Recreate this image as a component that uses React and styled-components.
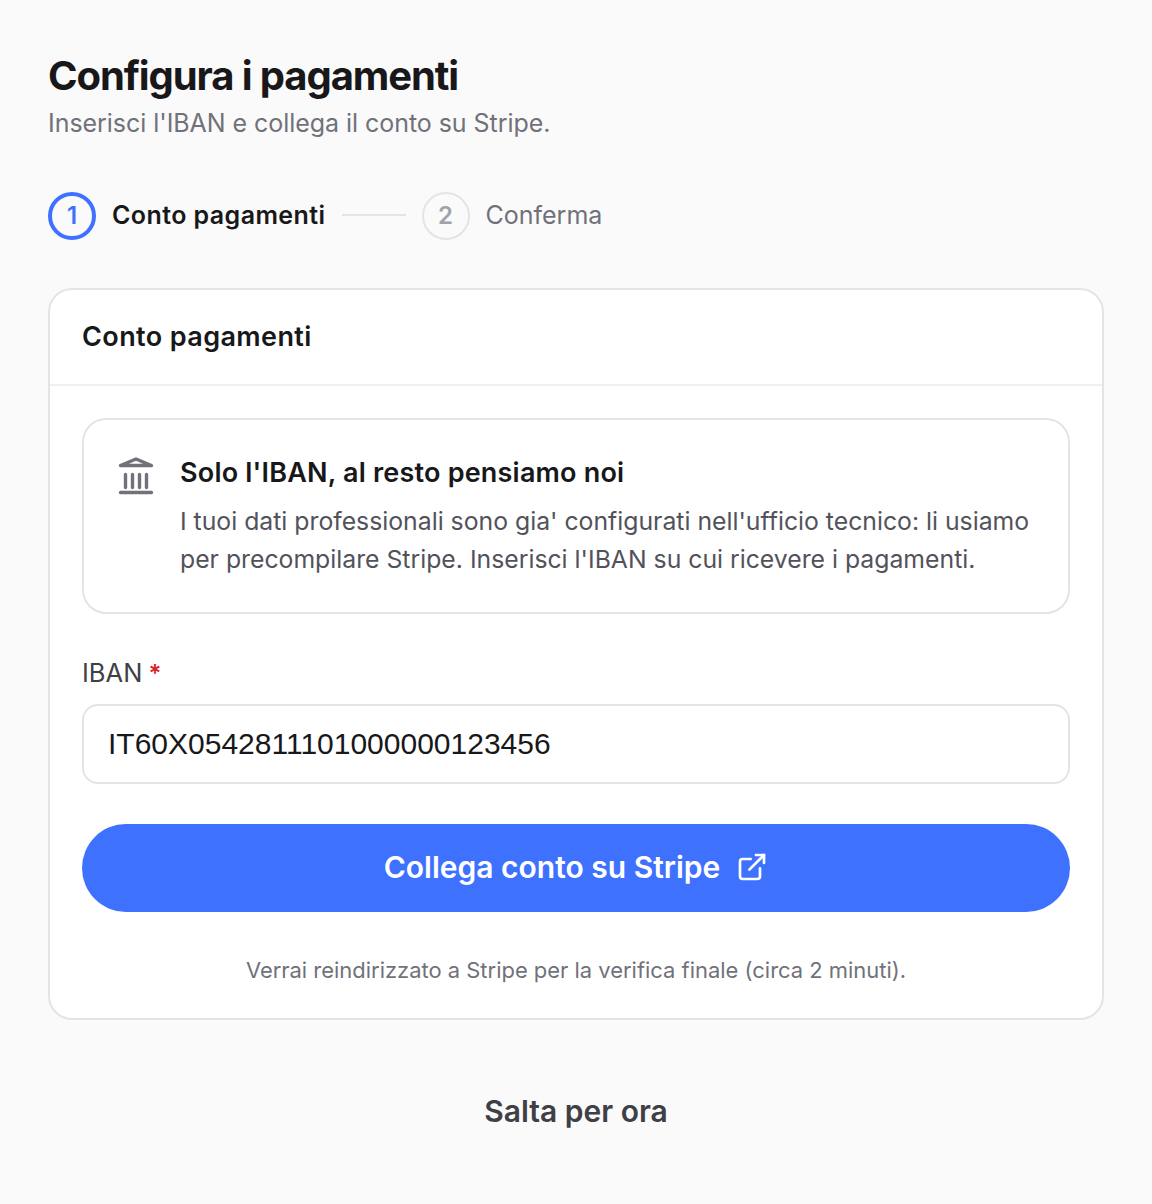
import React from 'react';
import styled, { createGlobalStyle } from 'styled-components';

const GlobalStyle = createGlobalStyle`
  html, body {
    margin: 0;
    padding: 0;
    background: #fafafa;
    font-family: "Inter", "Liberation Sans", sans-serif;
  }
  * { box-sizing: border-box; }
`;

const Page = styled.div`
  width: 1152px;
  height: 1204px;
  padding: 48px;
  background: #fafafa;
  display: flex;
  flex-direction: column;
`;

const Title = styled.h1`
  margin: 0;
  font-size: 40px;
  line-height: 56px;
  font-weight: 700;
  letter-spacing: -1.1px;
  color: #18181b;
`;

const Subtitle = styled.p`
  margin: 1px 0 0;
  font-size: 25px;
  line-height: 36px;
  font-weight: 400;
  letter-spacing: -0.05px;
  color: #71717a;
`;

const Stepper = styled.div`
  display: flex;
  align-items: center;
  gap: 16px;
  margin-top: 51px;
`;

const StepCircle = styled.div`
  width: 48px;
  height: 48px;
  border-radius: 50%;
  border: ${(p) => (p.$active ? '4px solid #3f71ff' : '2px solid #e4e4e7')};
  color: ${(p) => (p.$active ? '#3f71ff' : '#a1a1aa')};
  display: flex;
  align-items: center;
  justify-content: center;
  padding-bottom: 1px;
  font-size: 24px;
  font-weight: 600;
`;

const StepLabel = styled.span`
  padding-bottom: 2px;
  font-size: 25px;
  font-weight: ${(p) => (p.$active ? 600 : 400)};
  letter-spacing: ${(p) => (p.$active ? '0.42px' : '0')};
  color: ${(p) => (p.$active ? '#18181b' : '#71717a')};
`;

const StepLine = styled.div`
  width: 64px;
  height: 2px;
  margin-bottom: 2px;
  background: #e4e4e7;
`;

const Card = styled.section`
  margin-top: 48px;
  background: #fff;
  border: 2px solid #e4e4e7;
  border-radius: 24px;
`;

const CardHeader = styled.div`
  height: 96px;
  padding: 0 32px 2px;
  display: flex;
  align-items: center;
  border-bottom: 2px solid #f0f0f1;
`;

const CardTitle = styled.h2`
  margin: 0;
  font-size: 27px;
  font-weight: 600;
  letter-spacing: 0.4px;
  color: #18181b;
`;

const CardBody = styled.div`
  padding: 32px;
  display: flex;
  flex-direction: column;
`;

const InfoBox = styled.div`
  height: 196px;
  border: 2px solid #e4e4e7;
  border-radius: 24px;
  padding: 32px;
  display: flex;
  gap: 24px;
`;

const InfoIcon = styled.svg`
  width: 40px;
  height: 40px;
  flex-shrink: 0;
  margin-top: 4px;
`;

const InfoText = styled.div`
  display: flex;
  flex-direction: column;
  padding-top: 1px;
`;

const InfoTitle = styled.h3`
  margin: 0 0 9px;
  font-size: 27px;
  line-height: 40px;
  font-weight: 600;
  letter-spacing: 0.2px;
  color: #18181b;
`;

const InfoCopy = styled.p`
  margin: 0;
  font-size: 24.77px;
  line-height: 38px;
  white-space: nowrap;
  color: #52525b;
`;

const FieldLabel = styled.label`
  margin-top: 39px;
  font-size: 25.5px;
  line-height: 40px;
  color: #3f3f46;
`;

const Required = styled.span`
  margin-left: -1px;
  font-size: 24px;
  font-weight: 600;
  color: #dc2626;
`;

const IbanInput = styled.input`
  margin-top: 10px;
  height: 80px;
  padding: 0 24px;
  border: 2px solid #e4e4e7;
  border-radius: 16px;
  background: #fff;
  font-family: "Liberation Sans", Arial, sans-serif;
  font-size: 30px;
  color: #18181b;
  outline: none;
`;

const PrimaryButton = styled.button`
  margin-top: 40px;
  height: 88px;
  padding: 0 0 2px;
  border: none;
  border-radius: 44px;
  background: #3f71ff;
  color: #fff;
  font-family: inherit;
  font-size: 30px;
  font-weight: 600;
  display: flex;
  align-items: center;
  justify-content: center;
  gap: 16px;
`;

const Note = styled.p`
  margin: 42px 0 0;
  text-align: center;
  font-size: 21.95px;
  line-height: 32px;
  color: #71717a;
`;

const SkipButton = styled.button`
  margin-top: 71px;
  align-self: center;
  border: none;
  background: none;
  padding: 0;
  font-family: inherit;
  font-size: 30px;
  line-height: 40px;
  font-weight: 600;
  color: #3f3f46;
`;

const BankIcon = () => (
  <InfoIcon viewBox="0 0 40 40" fill="none" stroke="#71717a" strokeWidth="3.4" strokeLinecap="round" strokeLinejoin="round">
    <path d="M4.5 9.5 20 3l15.5 6.5z" />
    <path d="M9.5 18.5v13M16.5 18.5v13M23.5 18.5v13M30.5 18.5v13" />
    <path d="M4.5 36.5h31" />
  </InfoIcon>
);

const ExternalIcon = () => (
  <svg width="32" height="32" viewBox="0 0 24 24" fill="none" stroke="#fff" strokeWidth="2" strokeLinecap="round" strokeLinejoin="round">
    <path d="M18 13v6a2 2 0 0 1-2 2H5a2 2 0 0 1-2-2V8a2 2 0 0 1 2-2h6" />
    <path d="M15 3h6v6" />
    <path d="M10 14 21 3" />
  </svg>
);

export default function App() {
  return (
    <Page>
      <GlobalStyle />
      <Title>Configura i pagamenti</Title>
      <Subtitle>Inserisci l'IBAN e collega il conto su Stripe.</Subtitle>
      <Stepper>
        <StepCircle $active>1</StepCircle>
        <StepLabel $active>Conto pagamenti</StepLabel>
        <StepLine />
        <StepCircle>2</StepCircle>
        <StepLabel>Conferma</StepLabel>
      </Stepper>
      <Card>
        <CardHeader>
          <CardTitle>Conto pagamenti</CardTitle>
        </CardHeader>
        <CardBody>
          <InfoBox>
            <BankIcon />
            <InfoText>
              <InfoTitle>Solo l'IBAN, al resto pensiamo noi</InfoTitle>
              <InfoCopy>
                I tuoi dati professionali sono gia' configurati nell'ufficio tecnico: li usiamo
                <br />
                per precompilare Stripe. Inserisci l'IBAN su cui ricevere i pagamenti.
              </InfoCopy>
            </InfoText>
          </InfoBox>
          <FieldLabel>
            IBAN <Required>*</Required>
          </FieldLabel>
          <IbanInput readOnly value="IT60X0542811101000000123456" />
          <PrimaryButton>
            Collega conto su Stripe
            <ExternalIcon />
          </PrimaryButton>
          <Note>Verrai reindirizzato a Stripe per la verifica finale (circa 2 minuti).</Note>
        </CardBody>
      </Card>
      <SkipButton>Salta per ora</SkipButton>
    </Page>
  );
}
